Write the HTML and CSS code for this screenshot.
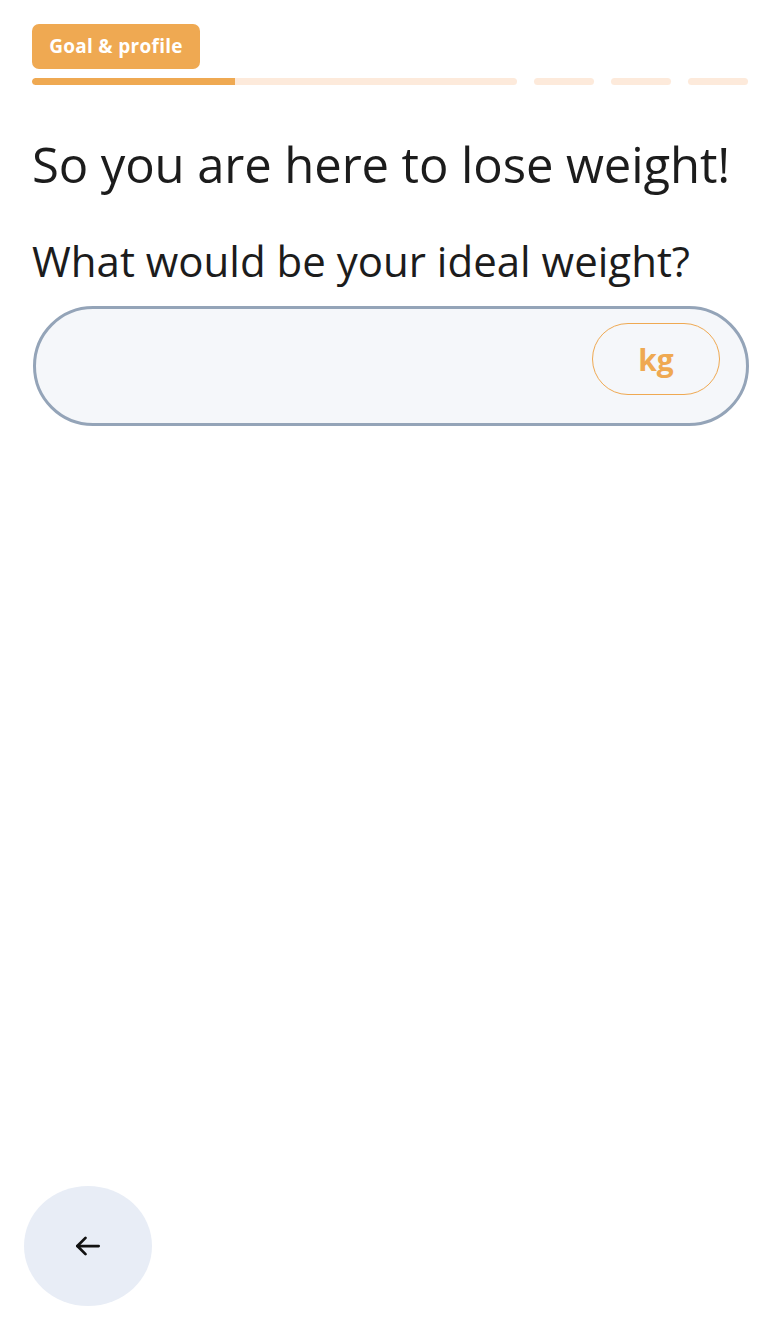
FILE: index.html
```html
<!DOCTYPE html>
<html>
<head>
<meta charset="utf-8">
<link rel="stylesheet" href="styles.css">
</head>
<body>
<div class="page">
  <div class="top">
    <span class="badge">Goal &amp; profile</span>
    <div class="progress">
      <div class="seg seg-main"><div class="fill" style="width: 41.8%"></div></div>
      <div class="seg seg-small"></div>
      <div class="seg seg-small"></div>
      <div class="seg seg-small"></div>
    </div>
  </div>
  <h1 class="title">So you are here to lose weight!</h1>
  <h2 class="question">What would be your ideal weight?</h2>
  <div class="field">
    <input class="field-input" type="text" aria-label="Ideal weight">
    <span class="unit">kg</span>
  </div>
  <div class="spacer"></div>
  <div class="footer">
    <button class="back" aria-label="Back">
      <svg width="30" height="30" viewBox="0 0 24 24" fill="none" stroke="#111" stroke-width="2.2" stroke-linecap="round" stroke-linejoin="round"><path d="M20.5 12H3.5"/><path d="M10 5.5L3.5 12L10 18.5"/></svg>
    </button>
  </div>
</div>
</body>
</html>
```

FILE: styles.css
```css
* { box-sizing: border-box; }
html, body { margin: 0; padding: 0; background: #fff; }
body { font-family: "Open Sans", "Noto Sans", sans-serif; color: #1c1c1c; }
.page { width: 780px; height: 1326px; display: flex; flex-direction: column; padding: 24px 32px 20px 32px; }
.top { display: flex; flex-direction: column; align-items: flex-start; gap: 9px; }
.badge { background: #efa952; color: #fff; font-weight: 700; font-size: 19px; height: 45px; line-height: 45px; border-radius: 7px; width: 168px; text-align: center; letter-spacing: 0.3px; white-space: nowrap; }
.progress { display: flex; gap: 17px; width: 716px; }
.seg { height: 7px; border-radius: 4px; background: #fdeadb; overflow: hidden; }
.seg-main { width: 486px; }
.seg-small { width: 60px; }
.fill { height: 100%; background: #efa952; border-radius: 4px 0 0 4px; }
.title { font-size: 49px; font-weight: 400; margin: 49px 0 0 0; line-height: 60px; letter-spacing: -0.1px; white-space: nowrap; }
.question { font-size: 42px; font-weight: 400; margin: 42px 0 0 0; line-height: 50px; letter-spacing: 0; white-space: nowrap; }
.field { margin-top: 20px; height: 120px; width: 716px; margin-left: 1px; border: 3px solid #94a4b8; border-radius: 60px; background: #f5f7fa; display: flex; align-items: center; padding: 0 26px 0 40px; }
.field-input { flex: 1; border: none; background: transparent; outline: none; font-size: 30px; font-family: inherit; }
.unit { width: 128px; height: 72px; border: 1.5px solid #efa952; border-radius: 36px; color: #efa952; font-weight: 700; font-size: 30px; display: flex; align-items: center; justify-content: center; margin-top: -14px; }
.spacer { flex: 1; }
.footer { margin-left: -8px; }
.back { width: 128px; height: 120px; border-radius: 50%; border: none; background: #e8edf6; display: flex; align-items: center; justify-content: center; padding: 0; }
```
